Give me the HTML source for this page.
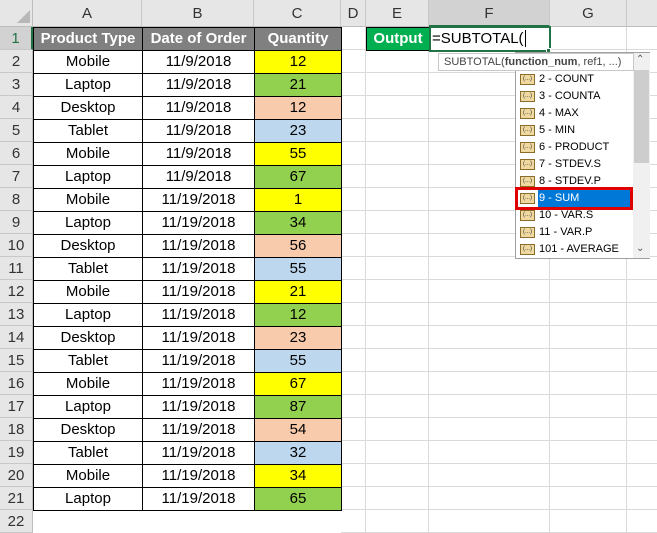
<!DOCTYPE html>
<html><head><style>
*{margin:0;padding:0;box-sizing:border-box}
body{width:657px;height:521px;overflow:hidden;background:#fff;font-family:"Liberation Sans",sans-serif;position:relative}
.a{position:absolute}
.ch{position:absolute;top:0;height:27px;background:#e6e6e6;border-right:1px solid #c8c8c8;border-bottom:1px solid #bdbdbd;text-align:center;line-height:27px;font-size:15px;color:#333}
.rh{position:absolute;left:0;width:33px;height:23px;background:#e6e6e6;border-bottom:1px solid #c8c8c8;border-right:1px solid #bdbdbd;text-align:center;line-height:23px;font-size:15px;color:#333}
.c{position:absolute;height:24px;border:1px solid #000;text-align:center;line-height:22px;font-size:15px;color:#000}
.g{position:absolute;height:23px;border-bottom:1px solid #dadada;border-right:1px solid #dadada}
.it{position:absolute;left:516px;width:117px;height:17px;font-size:11px;line-height:17px;color:#000;display:flex;align-items:center;white-space:nowrap}
.ic{display:block;flex:none;width:15px;height:11px;background:#f0d9a0;border:1px solid #8a6d2b;margin:0 4px 0 4px;font-size:6px;line-height:8px;text-align:center;color:#333}
</style></head><body>
<div class="a" style="left:0;top:0;width:33px;height:27px;background:#e6e6e6;border-right:1px solid #bdbdbd;border-bottom:1px solid #bdbdbd"></div>
<svg class="a" style="left:17px;top:10px" width="14" height="14"><polygon points="13,0 13,13 0,13" fill="#b8b8b8"/></svg>
<div class="ch" style="left:33px;width:109px">A</div>
<div class="ch" style="left:142px;width:112px">B</div>
<div class="ch" style="left:254px;width:87px">C</div>
<div class="ch" style="left:341px;width:25px">D</div>
<div class="ch" style="left:366px;width:63px">E</div>
<div class="ch" style="left:429px;width:121px;background:#d2d2d2;border-bottom:2px solid #217346">F</div>
<div class="ch" style="left:550px;width:77px">G</div>
<div class="ch" style="left:627px;width:40px"></div>
<div id="rows"></div>
<script>
var d=[["Mobile","11/9/2018",12,"#ffff00"],["Laptop","11/9/2018",21,"#92d050"],["Desktop","11/9/2018",12,"#f8cbad"],["Tablet","11/9/2018",23,"#bdd7ee"],["Mobile","11/9/2018",55,"#ffff00"],["Laptop","11/9/2018",67,"#92d050"],["Mobile","11/19/2018",1,"#ffff00"],["Laptop","11/19/2018",34,"#92d050"],["Desktop","11/19/2018",56,"#f8cbad"],["Tablet","11/19/2018",55,"#bdd7ee"],["Mobile","11/19/2018",21,"#ffff00"],["Laptop","11/19/2018",12,"#92d050"],["Desktop","11/19/2018",23,"#f8cbad"],["Tablet","11/19/2018",55,"#bdd7ee"],["Mobile","11/19/2018",67,"#ffff00"],["Laptop","11/19/2018",87,"#92d050"],["Desktop","11/19/2018",54,"#f8cbad"],["Tablet","11/19/2018",32,"#bdd7ee"],["Mobile","11/19/2018",34,"#ffff00"],["Laptop","11/19/2018",65,"#92d050"]];
var h="";
for(var i=0;i<22;i++){var t=27+i*23;
h+='<div class="rh" style="top:'+t+'px;'+(i==0?'background:#d2d2d2;border-right:2px solid #217346;color:#217346':'')+'">'+(i+1)+'</div>';
h+='<div class="g" style="top:'+t+'px;left:341px;width:25px"></div><div class="g" style="top:'+t+'px;left:366px;width:63px"></div><div class="g" style="top:'+t+'px;left:429px;width:121px"></div><div class="g" style="top:'+t+'px;left:550px;width:77px"></div><div class="g" style="top:'+t+'px;left:627px;width:40px"></div>';
if(i==0){h+='<div class="c" style="top:'+t+'px;left:33px;width:110px;background:#808080;color:#fff;font-weight:bold">Product Type</div><div class="c" style="top:'+t+'px;left:142px;width:113px;background:#808080;color:#fff;font-weight:bold">Date of Order</div><div class="c" style="top:'+t+'px;left:254px;width:88px;background:#808080;color:#fff;font-weight:bold">Quantity</div>';}
else if(i<=20){var r=d[i-1];h+='<div class="c" style="top:'+t+'px;left:33px;width:110px;background:#fff">'+r[0]+'</div><div class="c" style="top:'+t+'px;left:142px;width:113px;background:#fff">'+r[1]+'</div><div class="c" style="top:'+t+'px;left:254px;width:88px;background:'+r[3]+'">'+r[2]+'</div>';}
}
document.getElementById("rows").innerHTML=h;
</script>
<div class="a" style="left:366px;top:27px;width:64px;height:24px;background:#00b050;border:1px solid #000;color:#fff;font-weight:bold;font-size:15px;line-height:22px;text-align:center">Output</div>
<div class="a" style="left:429px;top:26px;width:122px;height:26px;background:#fff;border:2px solid #217346;font-size:15px;line-height:22px;padding-left:1px">=SUBTOTAL(<span style="border-left:1px solid #000;margin-left:1px"></span></div>
<div class="a" style="left:546px;top:48px;width:5px;height:5px;background:#217346;border:1px solid #fff"></div>
<div class="a" style="left:515px;top:52px;width:135px;height:207px;background:#fff;border:1px solid #a0a0a0"></div>
<div class="a" style="left:633px;top:53px;width:17px;height:205px;background:#f0f0f0"></div>
<div class="a" style="left:634px;top:70px;width:15px;height:93px;background:#cdcdcd"></div>
<div class="a" style="left:636px;top:54px;font-size:10px;color:#555">&#8963;</div>
<div class="a" style="left:636px;top:243px;font-size:10px;color:#555">&#8964;</div>
<div class="a" style="left:438px;top:53px;width:196px;height:18px;background:#fff;border:1px solid #c8c8c8;font-size:11px;line-height:16px;color:#444;padding-left:5px;white-space:nowrap">SUBTOTAL(<b>function_num</b>, ref1, ...)</div>
<div class="it" style="top:71px"><span class="ic">(...)</span>2 - COUNT</div>
<div class="it" style="top:88px"><span class="ic">(...)</span>3 - COUNTA</div>
<div class="it" style="top:105px"><span class="ic">(...)</span>4 - MAX</div>
<div class="it" style="top:122px"><span class="ic">(...)</span>5 - MIN</div>
<div class="it" style="top:139px"><span class="ic">(...)</span>6 - PRODUCT</div>
<div class="it" style="top:156px"><span class="ic">(...)</span>7 - STDEV.S</div>
<div class="it" style="top:173px"><span class="ic">(...)</span>8 - STDEV.P</div>
<div class="it" style="top:190px;background:linear-gradient(90deg,#fff 22px,#0078d7 22px);color:#fff"><span class="ic">(...)</span>9 - SUM</div>
<div class="a" style="left:515px;top:187px;width:118px;height:23px;border:3px solid #e00000"></div>
<div class="it" style="top:207px"><span class="ic">(...)</span>10 - VAR.S</div>
<div class="it" style="top:224px"><span class="ic">(...)</span>11 - VAR.P</div>
<div class="it" style="top:241px"><span class="ic">(...)</span>101 - AVERAGE</div>
</body></html>
